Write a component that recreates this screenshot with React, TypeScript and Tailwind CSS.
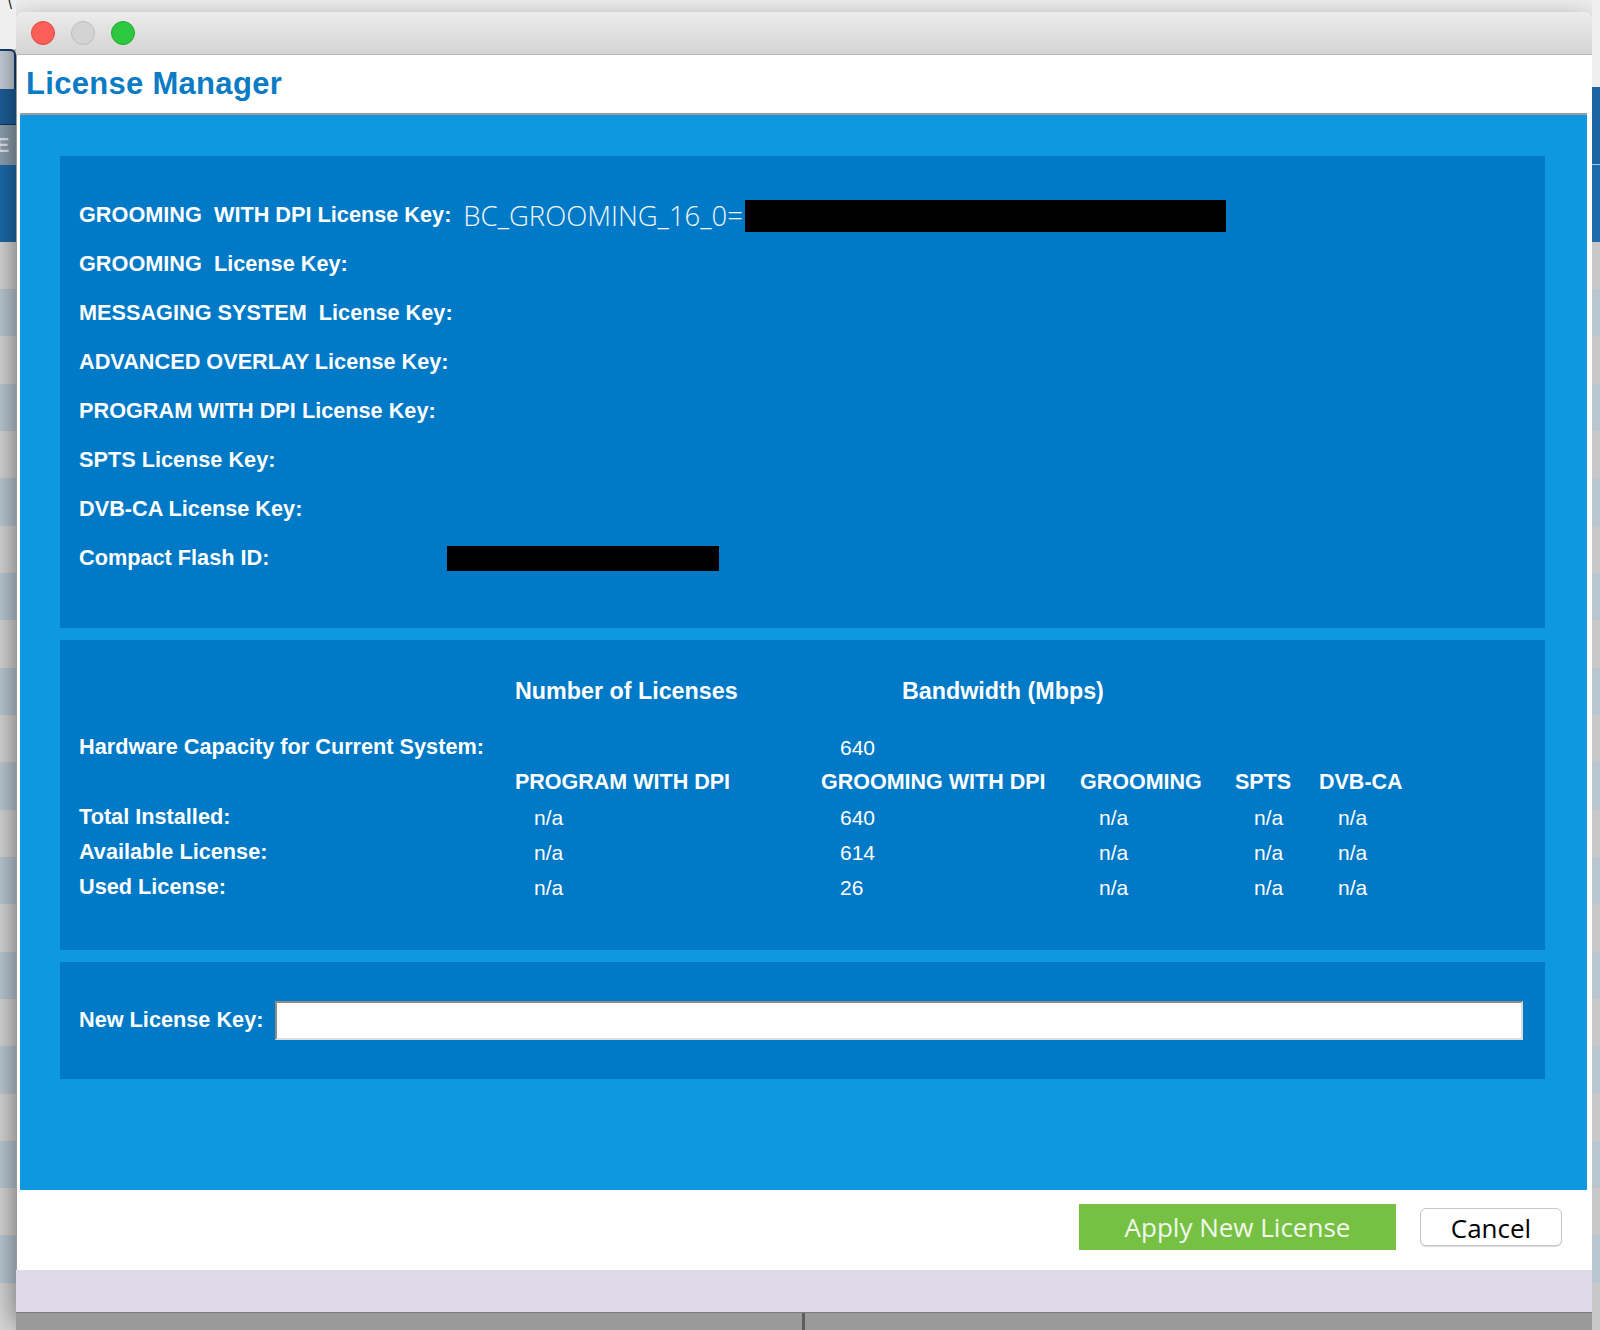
import React from "react";

// ─── Data ────────────────────────────────────────────────────────────────────
const keyRows = [
  "GROOMING  WITH DPI License Key:",
  "GROOMING  License Key:",
  "MESSAGING SYSTEM  License Key:",
  "ADVANCED OVERLAY License Key:",
  "PROGRAM WITH DPI License Key:",
  "SPTS License Key:",
  "DVB-CA License Key:",
];

const usageRows = [
  { label: "Total Installed:", values: ["n/a", "640", "n/a", "n/a", "n/a"] },
  { label: "Available License:", values: ["n/a", "614", "n/a", "n/a", "n/a"] },
  { label: "Used License:", values: ["n/a", "26", "n/a", "n/a", "n/a"] },
];

const gridCols = "grid grid-cols-[436px_306px_259px_155px_84px_1fr] items-center h-[35px]";

// ─── Desktop bits behind the window ─────────────────────────────────────────
function LeftStrip() {
  return (
    <div className="w-[16px] flex flex-col shrink-0">
      <div className="h-[50px] bg-[#efefef] relative">
        <span className="absolute left-[8px] -top-[6px] text-[14px] text-black">\</span>
      </div>
      <div className="h-[40px] bg-[#c9d3dc] border-t-2 border-r-2 border-[#123f73] rounded-tr-[6px]" />
      <div className="h-[37px] bg-[#1d5f9b] border-b border-[#0c355f]" />
      <div className="h-[40px] bg-[#8ea1b1] text-[#dfe6ec] text-[20px] font-bold leading-[40px] overflow-hidden">
        <span className="-ml-[4px]">E</span>
      </div>
      <div className="h-[78px] bg-[#1c6cab]" />
      {Array.from({ length: 23 }).map((_, i) => (
        <div key={i} className={`h-[48px] ${i % 2 === 0 ? "bg-[#d8d8d8]" : "bg-[#bccbd6]"}`} />
      ))}
    </div>
  );
}

function RightStrip() {
  return (
    <div className="w-[8px] flex flex-col shrink-0">
      <div className="h-[88px] bg-[#efefef]" />
      <div className="h-[79px] bg-[#1a66a5] border-b border-[#9fc3e0]" />
      <div className="h-[78px] bg-[#1c6cab]" />
      {Array.from({ length: 23 }).map((_, i) => (
        <div key={i} className={`h-[48px] ${i % 2 === 0 ? "bg-[#c8c8c8]" : "bg-[#b7c6d1]"}`} />
      ))}
    </div>
  );
}

// ─── Window chrome ───────────────────────────────────────────────────────────
function TitleBar() {
  return (
    <div className="h-[43px] rounded-t-[8px] bg-gradient-to-b from-[#ececec] to-[#d4d4d4] border-b border-[#b8b8b8] flex items-center gap-[16px] pl-[15px]">
      <span className="h-[24px] w-[24px] rounded-full bg-[#fc5f57] border border-[#e14640]" />
      <span className="h-[24px] w-[24px] rounded-full bg-[#d3d3d3] border border-[#bdbdbd]" />
      <span className="h-[24px] w-[24px] rounded-full bg-[#2ec840] border border-[#1fa92f]" />
    </div>
  );
}

export default function App() {
  return (
    <div className="w-[1600px] h-[1330px] overflow-hidden bg-[#efefef] flex font-['Liberation_Sans',Arial,sans-serif]">
      <LeftStrip />

      <div className="w-[1576px] flex flex-col shrink-0">
        <div className="mt-[12px] flex flex-col shadow-[0_12px_30px_rgba(0,0,0,0.55)] rounded-t-[8px]">
          <TitleBar />

          {/* Header */}
          <div className="h-[58px] bg-white flex items-center pl-[9px] border-l border-[#9a9a9a]">
            <h1 className="text-[31px] font-bold text-[#0a7bc4] tracking-[0.3px]">License Manager</h1>
          </div>

          {/* Body */}
          <div className="bg-white pl-[3px] pr-[5px] border-l border-[#9a9a9a]">
            <div className="h-[2px] bg-[#9c9c9c]" />
            <div className="h-[1075px] bg-[#0f97e0] pl-[40px] pr-[42px] pt-[41px] flex flex-col gap-[12px] text-white">
              {/* License keys */}
              <div className="h-[472px] bg-[#0079c6] pl-[19px] pt-[35px]">
                {keyRows.map((label, i) => (
                  <div key={label} className="h-[49px] flex items-center">
                    <span className="text-[21.7px] font-bold whitespace-pre">{label}</span>
                    {i === 0 && (
                      <>
                        <span className="ml-[12px] font-['Open_Sans',sans-serif] font-light text-[27.5px] text-[#f2f7fb]">
                          BC_GROOMING_16_0=
                        </span>
                        <span className="ml-[2px] w-[481px] h-[32px] bg-black" />
                      </>
                    )}
                  </div>
                ))}
                <div className="h-[49px] flex items-center">
                  <span className="w-[368px] text-[21.7px] font-bold">Compact Flash ID:</span>
                  <span className="w-[272px] h-[25px] bg-black" />
                </div>
              </div>

              {/* Capacity table */}
              <div className="h-[310px] bg-[#0079c6] pl-[19px] pt-[34px]">
                <div className={`${gridCols} text-[23.3px] font-bold`}>
                  <span />
                  <span>Number of Licenses</span>
                  <span className="pl-[81px] whitespace-nowrap">Bandwidth (Mbps)</span>
                </div>
                <div className={`${gridCols} mt-[21px] text-[21px]`}>
                  <span className="font-bold text-[21.7px] whitespace-nowrap">Hardware Capacity for Current System:</span>
                  <span />
                  <span className="pl-[19px]">640</span>
                </div>
                <div className={`${gridCols} text-[21.5px] font-bold whitespace-nowrap`}>
                  <span />
                  <span>PROGRAM WITH DPI</span>
                  <span>GROOMING WITH DPI</span>
                  <span>GROOMING</span>
                  <span>SPTS</span>
                  <span>DVB-CA</span>
                </div>
                {usageRows.map((row) => (
                  <div key={row.label} className={`${gridCols} text-[21px]`}>
                    <span className="font-bold text-[21.7px]">{row.label}</span>
                    {row.values.map((v, j) => (
                      <span key={j} className="pl-[19px]">
                        {v}
                      </span>
                    ))}
                  </div>
                ))}
              </div>

              {/* New key */}
              <div className="h-[117px] bg-[#0079c6] pl-[19px] pr-[22px] flex items-center gap-[12px]">
                <span className="text-[21.7px] font-bold whitespace-nowrap">New License Key:</span>
                <input
                  type="text"
                  className="flex-1 h-[39px] bg-white border-2 border-t-[#8c8c8c] border-l-[#8c8c8c] border-r-[#dcdcdc] border-b-[#dcdcdc] outline-none"
                />
              </div>
            </div>
          </div>

          {/* Footer */}
          <div className="h-[80px] bg-white border-l border-[#9a9a9a] flex items-center justify-end gap-[24px] pr-[30px] pb-[6px] font-['Open_Sans',sans-serif]">
            <button className="w-[317px] h-[46px] bg-[#76c043] text-[26px] text-white/90">Apply New License</button>
            <button className="w-[142px] h-[38px] bg-white border border-[#c6c6c6] rounded-[6px] shadow-[0_1px_1px_rgba(0,0,0,0.15)] text-[26px] text-black">
              Cancel
            </button>
          </div>
          <div className="h-[42px] bg-[#dedae8]" />
        </div>

        {/* desk under the window */}
        <div className="flex-1 bg-[#9a9a9a] border-t border-[#7a7a7a] flex">
          <div className="w-[786px]" />
          <div className="w-[3px] bg-[#5e5e5e]" />
        </div>
      </div>

      <RightStrip />
    </div>
  );
}
